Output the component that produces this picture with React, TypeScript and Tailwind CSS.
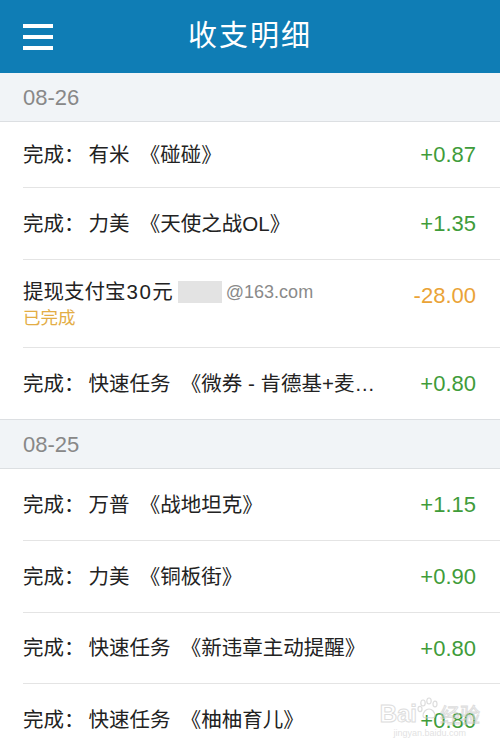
import { Fragment, ReactNode } from 'react';

type Row = {
  title: string;
  amount: string;
  kind: 'in' | 'out';
  email?: string;
  status?: string;
  h: string;
};

const groups: { date: string; rows: Row[] }[] = [
  {
    date: '08-26',
    rows: [
      { title: '完成：有米《碰碰》', amount: '+0.87', kind: 'in', h: 'h-[66px]' },
      { title: '完成：力美《天使之战OL》', amount: '+1.35', kind: 'in', h: 'h-[72px]' },
      { title: '提现支付宝', email: '@163.com', status: '已完成', amount: '-28.00', kind: 'out', h: 'h-[88px]' },
      { title: '完成：快速任务《微券 - 肯德基+麦…', amount: '+0.80', kind: 'in', h: 'h-[71px]' },
    ],
  },
  {
    date: '08-25',
    rows: [
      { title: '完成：万普《战地坦克》', amount: '+1.15', kind: 'in', h: 'h-[72px]' },
      { title: '完成：力美《铜板街》', amount: '+0.90', kind: 'in', h: 'h-[72px]' },
      { title: '完成：快速任务《新违章主动提醒》', amount: '+0.80', kind: 'in', h: 'h-[71px]' },
      { title: '完成：快速任务《柚柚育儿》', amount: '+0.80', kind: 'in', h: 'h-[72px]' },
    ],
  },
];

const punct: Record<string, string> = {
  '：': 'w-[1.2em] text-left',
  '《': 'w-[1.5em] text-right',
  '》': 'w-[0.6em] text-left',
};

function Title({ text }: { text: string }) {
  const parts: ReactNode[] = [];
  let buf = '';
  text.split('').forEach((ch, i) => {
    if (punct[ch]) {
      if (buf) parts.push(buf);
      buf = '';
      parts.push(
        <span key={i} className={`inline-block ${punct[ch]}`}>
          {ch}
        </span>
      );
    } else {
      buf += ch;
    }
  });
  if (buf) parts.push(buf);
  return <span className="whitespace-nowrap">{parts}</span>;
}

function MenuIcon() {
  return (
    <div className="flex flex-col gap-[7px] w-[30px]">
      <span className="block h-[4px] bg-white" />
      <span className="block h-[4px] bg-white" />
      <span className="block h-[4px] bg-white" />
    </div>
  );
}

function Watermark() {
  return (
    <div className="absolute right-[20px] bottom-[12px] flex flex-col items-center opacity-70 pointer-events-none">
      <div className="flex items-end">
        <span className="text-[24px] font-bold text-transparent [-webkit-text-stroke:1px_#cfcfcf] leading-none">Bai</span>
        <svg width="22" height="24" viewBox="0 0 22 22" className="mb-[6px]">
          <g fill="none" stroke="#cfcfcf" strokeWidth="1.2">
            <ellipse cx="6" cy="6" rx="2.2" ry="3" />
            <ellipse cx="12" cy="4" rx="2.2" ry="3" />
            <ellipse cx="18" cy="7" rx="2" ry="2.8" />
            <ellipse cx="3" cy="12" rx="2" ry="2.6" />
            <path d="M6 19c0-4 3-7 6-7s6 3 6 7c0 2-3 2-6 1.5C9 21 6 21 6 19z" />
          </g>
        </svg>
        <span className="text-[20px] text-transparent [-webkit-text-stroke:1px_#cfcfcf] leading-none ml-[1px]">经验</span>
      </div>
      <span className="text-[9px] text-[#d6d6d6] leading-none mt-[3px]">jingyan.baidu.com</span>
    </div>
  );
}

function ListRow({ row, last }: { row: Row; last: boolean }) {
  return (
    <div className={`${row.h} flex items-center pl-[23px] bg-white`}>
      <div className={`flex-1 h-full flex items-center pr-[24px] ${last ? '' : 'border-b border-[#e4e4e4]'}`}>
        <div className="flex-1 min-w-0">
          <div className="flex items-center text-[20.5px] leading-[26px] text-[#222]">
            {row.email ? (
              <>
                <span className="whitespace-nowrap">
                  {row.title}
                  <span className="tracking-[1.5px] ml-[1px]">30</span>元
                </span>
                <span className="inline-block w-[44px] h-[22px] bg-[#e3e3e3] ml-[5px]" />
                <span className="text-[18px] text-[#8a8a8a] ml-[4px]">{row.email}</span>
              </>
            ) : (
              <Title text={row.title} />
            )}
          </div>
          {row.status && (
            <div className="text-[17.5px] leading-[22px] text-[#e3ad45] mt-[2px]">{row.status}</div>
          )}
        </div>
        <div
          className={`text-[22px] ${row.status ? 'mb-[16px]' : ''} ${
            row.kind === 'in' ? 'text-[#3f9c3a]' : 'text-[#eaa337]'
          }`}
        >
          {row.amount}
        </div>
      </div>
    </div>
  );
}

export default function App() {
  return (
    <div
      className="relative w-[500px] h-[750px] overflow-hidden bg-white"
      style={{ fontFamily: '"Liberation Sans", "Noto Sans CJK SC", sans-serif' }}
    >
      <header className="h-[73px] bg-[#0f7db5] flex items-center px-[23px]">
        <MenuIcon />
        <div className="flex-1 text-center text-white text-[29px] tracking-[2px] pr-[30px]">收支明细</div>
      </header>
      {groups.map((g) => (
        <Fragment key={g.date}>
          <div className="h-[49px] bg-[#f1f4f7] border-b border-[#dcdfe2] flex items-center px-[23px] text-[22px] text-[#888]">
            {g.date}
          </div>
          {g.rows.map((r, i) => (
            <ListRow key={r.title} row={r} last={i === g.rows.length - 1} />
          ))}
          <div className="h-0 border-t border-[#dcdfe2]" />
        </Fragment>
      ))}
      <Watermark />
    </div>
  );
}
